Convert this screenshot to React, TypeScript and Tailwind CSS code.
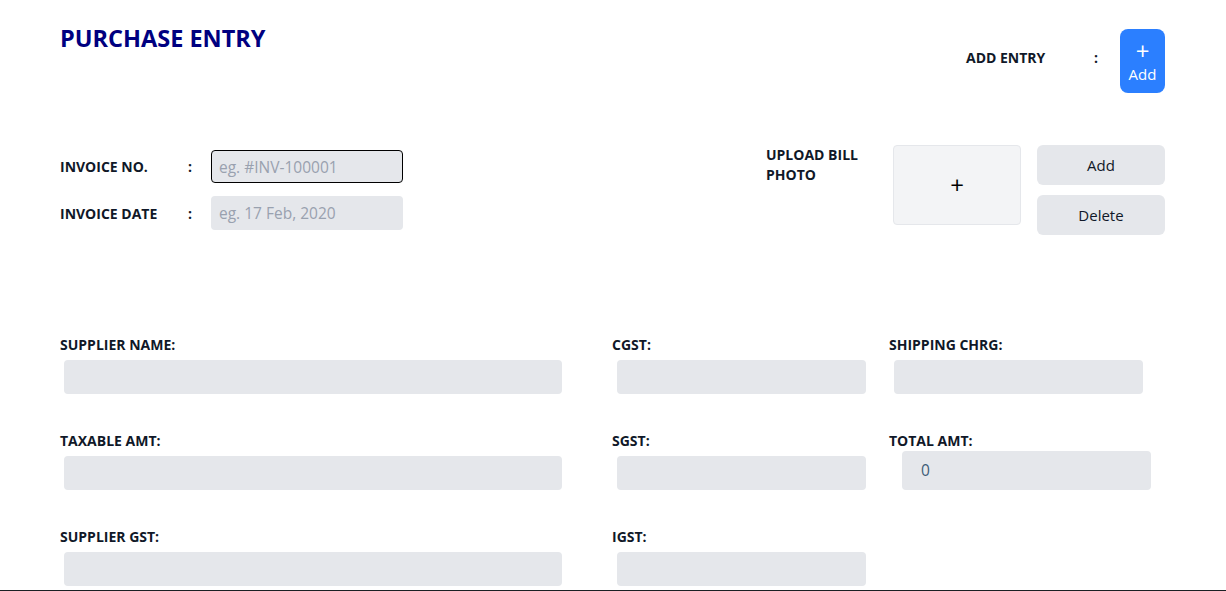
import React from "react";

const font = { fontFamily: '"Open Sans", "Noto Sans", sans-serif' };

function Field({
  label,
  inputClass = "ml-1 mt-[6px] h-[34px] w-full",
  value,
}: {
  label: string;
  inputClass?: string;
  value?: string;
}) {
  return (
    <div className="flex flex-col">
      <label className="text-[14px] font-bold leading-[18px] text-gray-900">{label}</label>
      <div className={`rounded bg-gray-200 ${inputClass}`}>
        {value !== undefined && (
          <span className="block px-[19px] pt-[8px] text-[15.5px] text-[#3d5d78]">{value}</span>
        )}
      </div>
    </div>
  );
}

export default function App() {
  return (
    <div style={font} className="h-[591px] overflow-hidden border-b border-[#1a2024] bg-white pl-[60px] pr-[61px] pt-[22px]">
      {/* header */}
      <div className="flex items-start justify-between">
        <h1 className="text-[23.5px] font-bold leading-[32px] text-[#000080]">PURCHASE ENTRY</h1>
        <div className="mt-[7px] flex items-center">
          <span className="-mt-2 w-32 text-[14px] font-bold text-gray-900">ADD ENTRY</span>
          <span className="-mt-2 w-[26px] text-[14px] font-bold text-gray-900">:</span>
          <button className="flex h-16 w-[45px] flex-col items-center justify-center rounded-lg bg-blue-500 text-white">
            <span className="text-[24px] leading-[26px]">+</span>
            <span className="text-[15px] leading-[20px]">Add</span>
          </button>
        </div>
      </div>

      {/* invoice + upload */}
      <div className="mt-[52px] flex justify-between">
        <div className="mt-[5px] flex flex-col gap-[13px]">
          <div className="flex items-center">
            <span className="w-32 text-[14px] font-bold text-gray-900">INVOICE NO.</span>
            <span className="w-[23px] text-[14px] font-bold text-gray-900">:</span>
            <input
              placeholder="eg. #INV-100001"
              className="h-[33px] w-48 rounded border border-black bg-gray-200 px-[7px] text-[15.5px] placeholder:text-gray-400 outline-none"
            />
          </div>
          <div className="flex items-center">
            <span className="w-32 text-[14px] font-bold text-gray-900">INVOICE DATE</span>
            <span className="w-[23px] text-[14px] font-bold text-gray-900">:</span>
            <input
              placeholder="eg. 17 Feb, 2020"
              className="h-[34px] w-48 rounded bg-gray-200 px-[8px] text-[15.5px] placeholder:text-gray-400 outline-none"
            />
          </div>
        </div>

        <div className="flex items-start">
          <span className="w-[127px] text-[14px] font-bold leading-[20px] text-gray-900">UPLOAD BILL PHOTO</span>
          <div className="flex h-20 w-32 items-center justify-center rounded border border-gray-200 bg-gray-100 text-[24px] text-black">
            +
          </div>
          <div className="ml-4 flex flex-col gap-[10px]">
            <button className="h-10 w-32 rounded-md bg-gray-200 text-[15px] text-gray-900">Add</button>
            <button className="h-10 w-32 rounded-md bg-gray-200 text-[15px] text-gray-900">Delete</button>
          </div>
        </div>
      </div>

      {/* details grid */}
      <div className="mt-[101px] grid grid-cols-[552px_277px_254px] gap-y-[38px]">
        <div>
          <Field label="SUPPLIER NAME:" inputClass="ml-1 mt-[6px] h-[34px] w-[498px]" />
        </div>
        <div>
          <Field label="CGST:" inputClass="ml-[5px] mt-[6px] h-[34px] w-[249px]" />
        </div>
        <div>
          <Field label="SHIPPING CHRG:" inputClass="ml-[5px] mt-[6px] h-[34px] w-[249px]" />
        </div>

        <div>
          <Field label="TAXABLE AMT:" inputClass="ml-1 mt-[6px] h-[34px] w-[498px]" />
        </div>
        <div>
          <Field label="SGST:" inputClass="ml-[5px] mt-[6px] h-[34px] w-[249px]" />
        </div>
        <div>
          <Field label="TOTAL AMT:" inputClass="ml-[13px] mt-[1px] h-[39px] w-[249px]" value="0" />
        </div>

        <div>
          <Field label="SUPPLIER GST:" inputClass="ml-1 mt-[6px] h-[34px] w-[498px]" />
        </div>
        <div>
          <Field label="IGST:" inputClass="ml-[5px] mt-[6px] h-[34px] w-[249px]" />
        </div>
        <div />
      </div>
    </div>
  );
}
